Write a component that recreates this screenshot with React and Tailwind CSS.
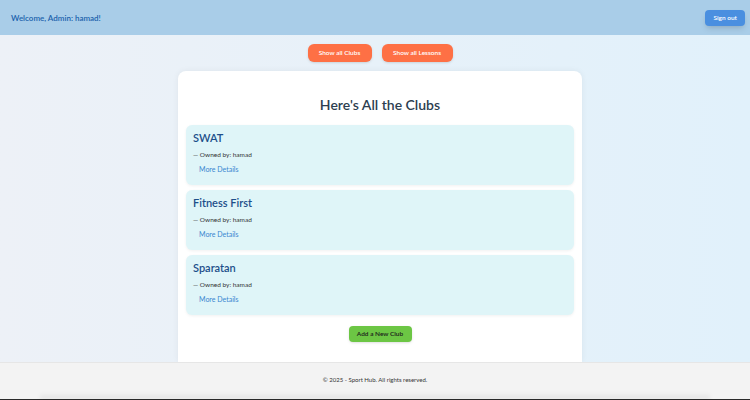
import React from 'react';

const clubs = [
  { id: 1, name: 'SWAT', owner: 'hamad' },
  { id: 2, name: 'Fitness First', owner: 'hamad' },
  { id: 3, name: 'Sparatan', owner: 'hamad' },
];

const font = { fontFamily: '"Comic Sans MS", Lato, "Noto Sans", sans-serif' };

const ClubCard = ({ club }) => (
  <div className="h-[60px] rounded-md bg-[#dff5f8] px-[7px] pt-[6px] shadow-[0_1px_3px_rgba(0,0,0,0.06)]">
    <h3 className="text-[11px] leading-[14px] font-semibold text-[#1d4f8a]">{club.name}</h3>
    <p className="mt-[5px] text-[6.5px] leading-[9px] text-[#333]">— Owned by: {club.owner}</p>
    <button className="block mt-[6px] ml-[6px] text-[7px] leading-[9px] text-[#3a86d0]">More Details</button>
  </div>
);

export default function App() {
  return (
    <div className="w-full h-[400px] flex flex-col overflow-hidden" style={font}>
      {/* Header */}
      <header className="h-[35px] flex-shrink-0 bg-[#a9cde8] flex items-center justify-between pl-[11px] pr-[5px]">
        <span className="text-[8px] font-semibold text-[#1b62ac]">Welcome, Admin: hamad!</span>
        <button className="h-[16px] px-[8px] rounded bg-[#4a8fe0] text-white text-[6.5px] font-semibold shadow-md">
          Sign out
        </button>
      </header>

      {/* Main */}
      <main className="flex-1 bg-gradient-to-r from-[#edf1f7] to-[#e1f1fb] flex flex-col items-center pt-[9px] pl-[10px]">
        <div className="flex gap-[10px]">
          <button className="h-[18px] w-[64px] rounded-md bg-[#fe7045] text-white text-[6.5px] font-semibold shadow-sm">
            Show all Clubs
          </button>
          <button className="h-[18px] w-[71px] rounded-md bg-[#fe7045] text-white text-[6.5px] font-semibold shadow-sm">
            Show all Lessons
          </button>
        </div>

        <div className="mt-[9px] w-[404px] flex-1 bg-white rounded-t-lg shadow-[0_0_6px_rgba(0,0,0,0.06)] px-[8px] pt-[25px] flex flex-col">
          <h2 className="text-center text-[14px] leading-[18px] font-semibold text-[#2c3e50]">Here's All the Clubs</h2>
          <div className="mt-[11px] flex flex-col gap-[5px]">
            {clubs.map(club => (
              <ClubCard key={club.id} club={club} />
            ))}
          </div>
          <div className="mt-[11px] flex justify-center">
            <button className="h-[16px] w-[63px] rounded bg-[#6cc644] text-[#1a1a1a] text-[6.5px] font-semibold shadow-sm">
              Add a New Club
            </button>
          </div>
        </div>
      </main>

      {/* Footer */}
      <footer className="h-[38px] flex-shrink-0 bg-[#f3f3f3] border-t border-[#e6e6e6] flex flex-col">
        <div className="flex-1 flex items-center justify-center pt-[2px]">
          <span className="text-[6px] text-[#333]">© 2025 - Sport Hub. All rights reserved.</span>
        </div>
        <div className="h-[5px] mx-[40px] bg-gradient-to-b from-transparent to-black/10 blur-[2px]" />
        <div className="h-[1px] bg-[#2a2a2a]" />
      </footer>
    </div>
  );
}
